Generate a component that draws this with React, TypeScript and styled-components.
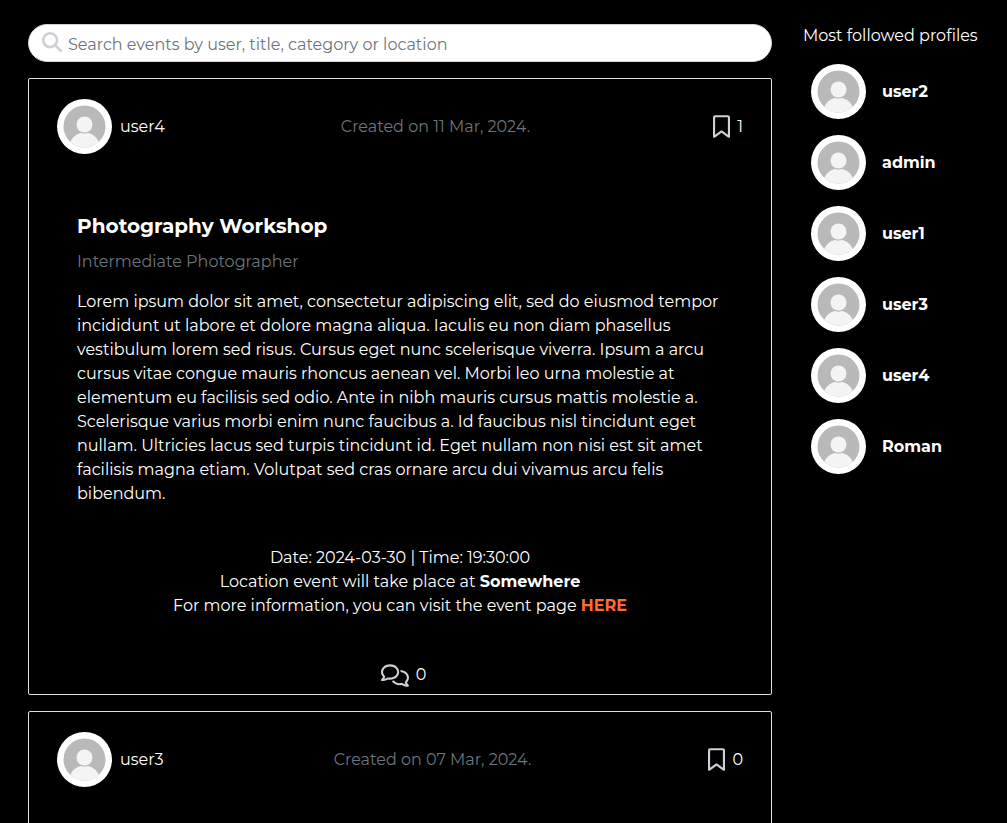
import React, { useId } from "react";
import styled, { createGlobalStyle } from "styled-components";
import { FaMagnifyingGlass, FaRegBookmark, FaRegComments } from "react-icons/fa6";

const GlobalStyle = createGlobalStyle`
  *, *::before, *::after { box-sizing: border-box; }
  body {
    margin: 0;
    background: #000;
    color: #fff;
    font-family: Montserrat, Inter, sans-serif;
    font-size: 16px;
    line-height: 24px;
  }
`;

const Page = styled.div`
  display: flex;
  align-items: flex-start;
  gap: 31px;
  padding: 24px 28px;
`;

const Feed = styled.main`
  flex: 1;
  min-width: 0;
  display: flex;
  flex-direction: column;
  gap: 16px;
`;

const SearchForm = styled.form`
  display: flex;
  align-items: center;
  gap: 6px;
  height: 38px;
  padding: 0 13px;
  background: #fff;
  border: 1px solid #ced4da;
  border-radius: 19px;
  color: #cfcfd7;
  svg { margin-bottom: 2px; }
`;

const SearchInput = styled.input`
  flex: 1;
  min-width: 0;
  height: 100%;
  padding: 2px 0 0;
  border: 0;
  outline: 0;
  background: transparent;
  font: inherit;
  color: #212529;
  &::placeholder { color: #6c757d; opacity: 1; }
`;

const Card = styled.article`
  border: 1px solid #dfdfdf;
  border-radius: 2px;
  padding: 20px 28px 7px;
`;

const CardHeader = styled.header`
  display: flex;
  align-items: center;
  justify-content: space-between;
`;

const AuthorLink = styled.a`
  display: flex;
  align-items: center;
  gap: 8px;
  color: #fff;
  text-decoration: none;
`;

const Created = styled.span`
  color: #6c757d;
`;

const IconButton = styled.button`
  display: flex;
  align-items: center;
  gap: 7px;
  padding: 0 0 0 7px;
  border: 0;
  background: transparent;
  color: #fff;
  font: inherit;
  cursor: pointer;
`;

const BookmarkIcon = styled(FaRegBookmark)`
  width: 17px;
  height: 23px;
  color: #cfcfd7;
`;

const CommentsIcon = styled(FaRegComments)`
  width: 28px;
  height: 23px;
  color: #cfcfd7;
`;

const CardBody = styled.div`
  padding: 60px 20px 0;
`;

const Title = styled.h2`
  margin: 0 0 12px;
  font-size: 20px;
  line-height: 24px;
  font-weight: 700;
`;

const Subtitle = styled.p`
  margin: 0 0 16px;
  color: #6c757d;
`;

const Description = styled.p`
  margin: 0;
`;

const Details = styled.div`
  margin: 40px 0;
  text-align: center;
`;

const EventLink = styled.a`
  color: #ff6b35;
  font-weight: 700;
  text-decoration: none;
`;

const CardFooter = styled.footer`
  display: flex;
  justify-content: center;
  padding-top: 5px;
`;

const Sidebar = styled.aside`
  width: 176px;
  flex: none;
`;

const SidebarTitle = styled.h2`
  margin: 0 0 16px;
  font-size: 16px;
  line-height: 24px;
  font-weight: 400;
  white-space: nowrap;
`;

const ProfileList = styled.ul`
  display: flex;
  flex-direction: column;
  gap: 16px;
  margin: 0;
  padding: 0 0 0 8px;
  list-style: none;
`;

const ProfileLink = styled(AuthorLink)`
  gap: 16px;
  font-weight: 700;
`;

function Avatar() {
  const clip = useId();
  return (
    <svg width="55" height="55" viewBox="0 0 55 55" aria-hidden="true">
      <clipPath id={clip}>
        <circle cx="27.5" cy="27.5" r="21" />
      </clipPath>
      <circle cx="27.5" cy="27.5" r="27.5" fill="#fff" />
      <g clipPath={`url(#${clip})`}>
        <rect width="55" height="55" fill="#b9b9b9" />
        <ellipse cx="27.5" cy="49" rx="15.5" ry="15.5" fill="#f4f4f4" />
        <circle cx="27.5" cy="25.5" r="9.2" fill="#b9b9b9" />
        <circle cx="27.5" cy="25.5" r="8" fill="#f4f4f4" />
      </g>
    </svg>
  );
}

interface EventPost {
  author: string;
  created: string;
  bookmarks: number;
  title: string;
  level: string;
}

const posts: EventPost[] = [
  { author: "user4", created: "11 Mar, 2024.", bookmarks: 1, title: "Photography Workshop", level: "Intermediate Photographer" },
  { author: "user3", created: "07 Mar, 2024.", bookmarks: 0, title: "", level: "" },
];

const profiles = ["user2", "admin", "user1", "user3", "user4", "Roman"];

function EventCard({ post }: { post: EventPost }) {
  return (
    <Card>
      <CardHeader>
        <AuthorLink href="#"><Avatar />{post.author}</AuthorLink>
        <Created>Created on {post.created}</Created>
        <IconButton type="button" aria-label="Bookmark event">
          <BookmarkIcon />{post.bookmarks}
        </IconButton>
      </CardHeader>
      <CardBody>
        {post.title && (
          <>
            <Title>{post.title}</Title>
            <Subtitle>{post.level}</Subtitle>
            <Description>
              Lorem ipsum dolor sit amet, consectetur adipiscing elit, sed do eiusmod tempor
              incididunt ut labore et dolore magna aliqua. Iaculis eu non diam phasellus
              vestibulum lorem sed risus. Cursus eget nunc scelerisque viverra. Ipsum a arcu
              cursus vitae congue mauris rhoncus aenean vel. Morbi leo urna molestie at
              elementum eu facilisis sed odio. Ante in nibh mauris cursus mattis molestie a.
              Scelerisque varius morbi enim nunc faucibus a. Id faucibus nisl tincidunt eget
              nullam. Ultricies lacus sed turpis tincidunt id. Eget nullam non nisi est sit amet
              facilisis magna etiam. Volutpat sed cras ornare arcu dui vivamus arcu felis
              bibendum.
            </Description>
            <Details>
              Date: 2024-03-30 | Time: 19:30:00<br />
              Location event will take place at <strong>Somewhere</strong><br />
              For more information, you can visit the event page <EventLink href="#">HERE</EventLink>
            </Details>
          </>
        )}
      </CardBody>
      {post.title && (
        <CardFooter>
          <IconButton type="button" aria-label="Show comments">
            <CommentsIcon />0
          </IconButton>
        </CardFooter>
      )}
    </Card>
  );
}

export default function App() {
  return (
    <>
      <GlobalStyle />
      <Page>
        <Feed>
          <SearchForm role="search">
            <FaMagnifyingGlass size={20} />
            <SearchInput type="text" aria-label="Search events" placeholder="Search events by user, title, category or location" />
          </SearchForm>
          {posts.map((post) => <EventCard key={post.author} post={post} />)}
        </Feed>
        <Sidebar>
          <SidebarTitle>Most followed profiles</SidebarTitle>
          <ProfileList>
            {profiles.map((name) => (
              <li key={name}><ProfileLink href="#"><Avatar />{name}</ProfileLink></li>
            ))}
          </ProfileList>
        </Sidebar>
      </Page>
    </>
  );
}
